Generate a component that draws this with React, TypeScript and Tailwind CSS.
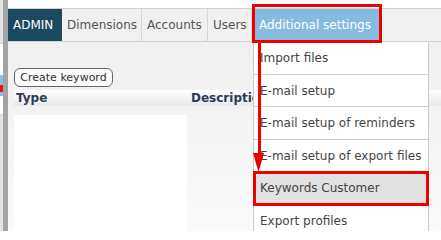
import React from "react";

const tabs = [
  { label: "Dimensions", w: "w-[80px]" },
  { label: "Accounts", w: "w-[66px]" },
  { label: "Users", w: "w-[44px]" },
];

const menu = [
  { label: "Import files", h: "h-[33px]" },
  { label: "E-mail setup", h: "h-[32px]" },
  { label: "E-mail setup of reminders", h: "h-[33px]" },
  { label: "E-mail setup of export files", h: "h-[32px]" },
  { label: "Keywords Customer", h: "h-[33px]", active: true },
  { label: "Export profiles", h: "h-[33px]" },
];

const App = () => {
  return (
    <div className="relative w-[441px] h-[231px] overflow-hidden flex bg-[#f2f2f2] font-['DejaVu_Sans',sans-serif] text-[12px]">
      {/* edge of the window behind */}
      <div className="w-[3px] flex flex-col bg-[#e4e4e4]">
        <div className="h-[43px]" />
        <div className="h-[72px] bg-white border-y border-[#cfcfcf] flex flex-col">
          <div className="h-[31px]" />
          <div className="h-[10px] bg-[#8cbfe0]" />
          <div className="h-[7px] bg-[#e8141c]" />
          <div className="h-[4px] bg-[#8cbfe0]" />
        </div>
      </div>
      <div className="w-[5px] bg-[#a4a4a4]" />

      <div className="flex-1 flex flex-col">
        <div className="h-[8px] bg-white" />
        {/* tab bar */}
        <div className="h-[34px] flex bg-[#f0f0f0] border-t border-b border-[#d2d2d2] text-[#555]">
          <div className="w-[54px] pl-[5px] flex items-center bg-[#1b495d] text-white">ADMIN</div>
          {tabs.map((t) => (
            <div key={t.label} className={`${t.w} pl-[5px] flex items-center border-r border-[#d6d6d6]`}>
              {t.label}
            </div>
          ))}
          <div className="w-[125px] ml-[3px] pl-[4px] flex items-center bg-[#86bbe0] text-white">
            Additional settings
          </div>
        </div>

        {/* content */}
        <div className="flex-1 flex flex-col bg-gradient-to-b from-[#f0f0f0] to-[#fafafa] pl-[6px]">
          <div className="h-[26px]" />
          <button className="w-[99px] h-[19px] rounded-[6px] border border-[#666] bg-[#fafafa] text-[#333] text-[11px] leading-none flex items-center justify-center">
            Create keyword
          </button>
          <div className="h-[3px]" />
          <div className="h-[16px] flex items-center bg-gradient-to-b from-white to-[#e9e9e9] font-bold text-[#2b3a55]">
            <span className="pl-[2px] w-[177px]">Type</span>
            <span>Description</span>
          </div>
          <div className="h-[9px]" />
          <div className="w-[173px] flex-1 bg-white" />
        </div>
      </div>

      {/* dropdown menu */}
      <div className="absolute left-[253px] top-[42px] w-[176px] bg-white border-x border-[#c9c9c9] text-[#444]">
        {menu.map((m) => (
          <div
            key={m.label}
            className={`${m.h} pl-[6px] flex items-center border-b border-[#cdcdcd] ${m.active ? "bg-[#e1e1e1]" : ""}`}
          >
            {m.label}
          </div>
        ))}
      </div>

      {/* annotations */}
      <div className="absolute left-[252px] top-[4px] w-[130px] h-[39px] border-[3px] border-[#ee0000]" />
      <div className="absolute left-[253px] top-[171px] w-[176px] h-[35px] border-[3px] border-[#ee0000]" />
      <svg className="absolute left-[250px] top-[40px]" width="20" height="134" viewBox="0 0 20 134">
        <rect x="8" y="0" width="3" height="115" fill="#ee0000" />
        <polygon points="3,113 14,113 8.5,132" fill="#ee0000" />
      </svg>
    </div>
  );
};

export default App;
